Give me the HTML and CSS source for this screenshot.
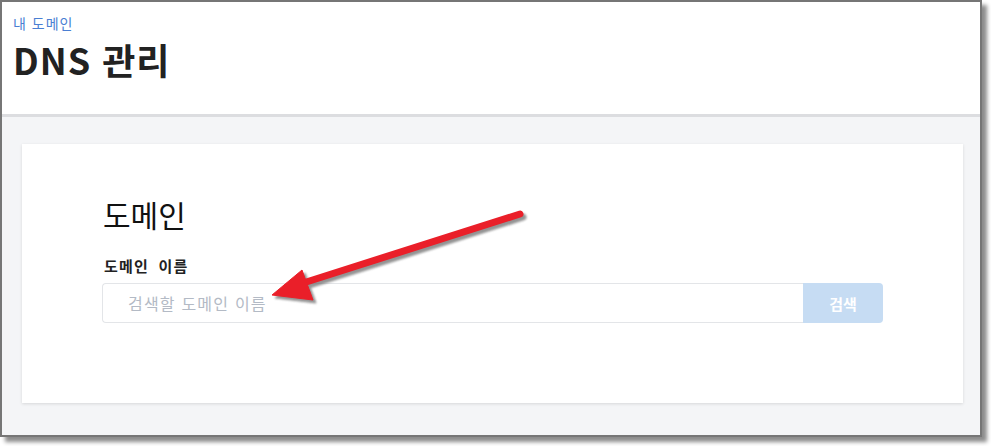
FILE: index.html
```html
<!DOCTYPE html>
<html lang="ko">
<head>
<meta charset="utf-8">
<link rel="stylesheet" href="styles.css">
</head>
<body>
<div class="window">
  <header class="page-header">
    <div class="breadcrumb">내 도메인</div>
    <h1 class="title">DNS 관리</h1>
  </header>
  <main class="main">
    <section class="card">
      <h2 class="card-title">도메인</h2>
      <label class="field-label" for="domain">도메인 이름</label>
      <div class="search-row">
        <input id="domain" class="search-input" type="text" placeholder="검색할 도메인 이름">
        <button class="search-btn" type="button">검색</button>
      </div>
    </section>
  </main>
</div>
<svg class="arrow" width="991" height="446" viewBox="0 0 991 446">
  <defs>
    <filter id="blur" x="-10%" y="-10%" width="120%" height="120%">
      <feGaussianBlur stdDeviation="1"/>
    </filter>
  </defs>
  <g fill="#666" stroke="#666" opacity="0.7" filter="url(#blur)" transform="translate(3,3)">
    <line x1="520" y1="214" x2="300" y2="284" stroke-width="7" stroke-linecap="round"/>
    <polygon points="272,295 302,270 313,300" stroke-width="1"/>
  </g>
  <g fill="#ea1f29" stroke="#ea1f29">
    <line x1="520" y1="214" x2="300" y2="284" stroke-width="7" stroke-linecap="round"/>
    <polygon points="272,295 302,270 313,300" stroke-width="1" stroke-linejoin="round"/>
  </g>
</svg>
</body>
</html>
```

FILE: styles.css
```css
html, body {
  margin: 0;
  padding: 0;
  background: #ffffff;
}

body {
  font-family: "Noto Sans CJK KR", "Noto Sans", sans-serif;
  position: relative;
  width: 991px;
  height: 446px;
  overflow: hidden;
}

.window {
  box-sizing: border-box;
  width: 982px;
  height: 437px;
  border: 2px solid #767676;
  box-shadow: 5px 5px 4px rgba(0, 0, 0, 0.45);
  display: flex;
  flex-direction: column;
  background: #f4f5f7;
}

.page-header {
  background: #ffffff;
  box-sizing: border-box;
  border-bottom: 3px solid #dcdde0;
  padding: 11px 0 0 11px;
  height: 115px;
  flex: none;
}

.breadcrumb {
  font-size: 14px;
  line-height: 20px;
  letter-spacing: 1px;
  color: #4a7fd3;
}

.title {
  margin: 4px 0 0 0;
  font-size: 36px;
  line-height: 44px;
  font-weight: 700;
  color: #222222;
  letter-spacing: 1px;
}

.main {
  flex: 1;
  padding: 27px 17px 0 20px;
}

.card {
  background: #ffffff;
  height: 259px;
  box-sizing: border-box;
  padding: 50px 80px 0 80px;
  box-shadow: 0 1px 3px rgba(0, 0, 0, 0.12);
}

.card-title {
  margin: 0 0 0 1px;
  font-size: 30px;
  line-height: 40px;
  font-weight: 400;
  color: #111111;
}

.field-label {
  display: block;
  margin: 22px 0 7px 2px;
  font-size: 15px;
  line-height: 20px;
  font-weight: 700;
  letter-spacing: 1.2px;
  word-spacing: 4px;
  color: #222222;
}

.search-row {
  display: flex;
  height: 40px;
}

.search-input {
  flex: 1;
  box-sizing: border-box;
  height: 40px;
  border: 1px solid #e3e5e8;
  border-right: none;
  border-radius: 4px 0 0 4px;
  padding: 0 0 0 25px;
  font-family: "Noto Sans CJK KR", "Noto Sans", sans-serif;
  font-size: 16px;
  letter-spacing: 1.2px;
  color: #333;
  outline: none;
}

.search-input::placeholder {
  color: #b3bac5;
}

.search-btn {
  width: 80px;
  height: 40px;
  border: none;
  border-radius: 0 4px 4px 0;
  background: #c6dcf3;
  color: #ffffff;
  font-family: "Noto Sans CJK KR", "Noto Sans", sans-serif;
  font-size: 15px;
  font-weight: 700;
  padding: 0;
}

.arrow {
  position: absolute;
  left: 0;
  top: 0;
  pointer-events: none;
}
```
